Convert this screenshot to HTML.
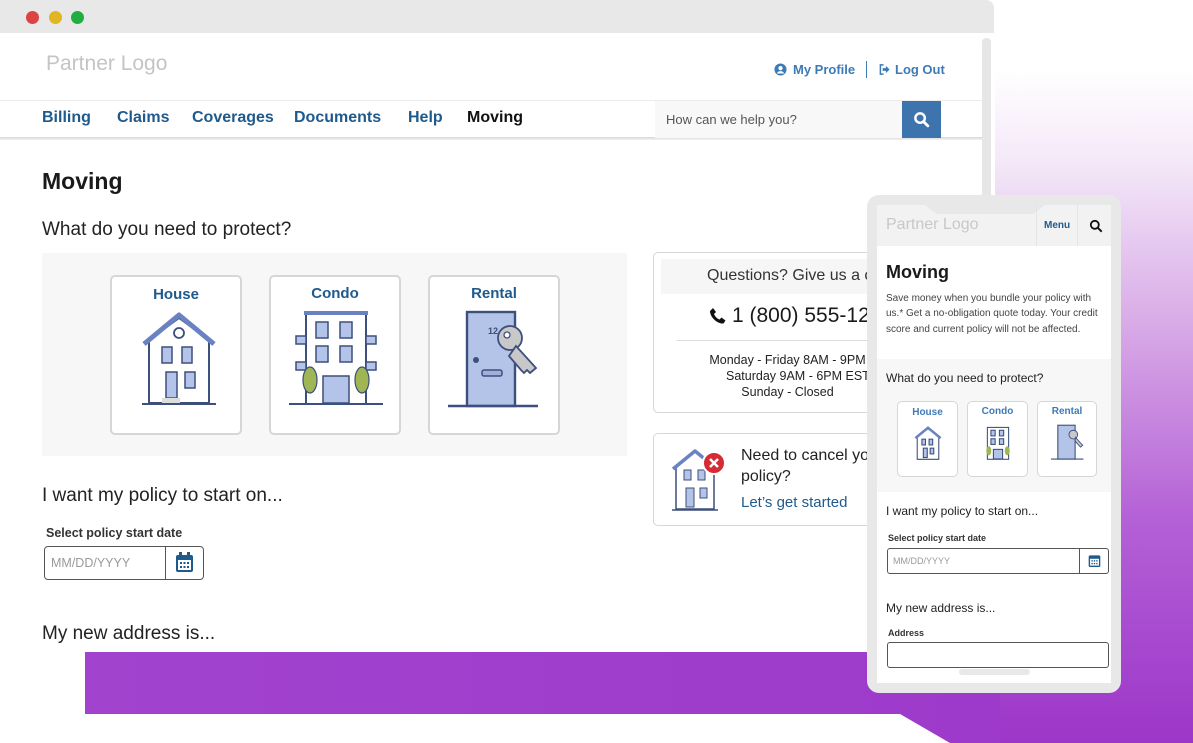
<!DOCTYPE html>
<html><head><meta charset="utf-8">
<style>
*{margin:0;padding:0;box-sizing:border-box}
body{width:1193px;height:743px;overflow:hidden;position:relative;background:#fff;font-family:"Liberation Sans",Arial,sans-serif;color:#1a1a1a}
.a{position:absolute}
.nav{font-size:16px;font-weight:bold;color:#1f5a8c;top:109px}
.card{background:#fff;border:2px solid #d6d6d6;border-radius:5px}
.ct{font-weight:bold;color:#1f5a8c;text-align:center}
</style></head><body>
<div class="a" style="left:995px;top:0;width:198px;height:743px;background:linear-gradient(180deg,#fff 0px,#fff 70px,#f4e9f8 160px,#d7a8e6 330px,#b460d6 520px,#9c36c9 743px)"></div>
<div class="a" style="left:0;top:652px;width:1000px;height:91px;background:linear-gradient(90deg,#a244cf,#9d3acb);clip-path:polygon(85px 0,1000px 0,1000px 91px,950px 91px,900px 62px,85px 62px)"></div>

<div class="a" style="left:0;top:0;width:994px;height:33px;background:#e8e8e8;border-top-right-radius:8px"></div>
<div class="a" style="left:26px;top:11px;width:13px;height:13px;border-radius:50%;background:#dc4444"></div>
<div class="a" style="left:49px;top:11px;width:13px;height:13px;border-radius:50%;background:#e0b624"></div>
<div class="a" style="left:71px;top:11px;width:13px;height:13px;border-radius:50%;background:#22ad40"></div>
<div class="a" style="left:982px;top:38px;width:9px;height:614px;background:#e6e6e6;border-radius:4px"></div>

<div class="a" style="left:46px;top:52px;font-size:21px;color:#c4c4c4">Partner Logo</div>
<div class="a" style="left:774px;top:62px;font-size:13px;font-weight:bold;color:#3d7ab8;display:flex;align-items:center;gap:6px">
<svg width="13" height="13" viewBox="0 0 14 14"><circle cx="7" cy="7" r="6.5" fill="#3d7ab8"/><circle cx="7" cy="5.5" r="2.3" fill="#fff"/><path d="M3 11.3c1-2 2.4-2.6 4-2.6s3 .6 4 2.6" fill="#fff"/></svg>My Profile</div>
<div class="a" style="left:866px;top:61px;width:1px;height:17px;background:#3d7ab8"></div>
<div class="a" style="left:879px;top:62px;font-size:13px;font-weight:bold;color:#3d7ab8;display:flex;align-items:center;gap:5px">
<svg width="11" height="11" viewBox="0 0 12 12"><path d="M5 1H1.5v10H5" fill="none" stroke="#3d7ab8" stroke-width="1.6"/><path d="M4 4.5h3.5V2L11.5 6 7.5 10V7.5H4z" fill="#3d7ab8"/></svg>Log Out</div>

<div class="a" style="left:0;top:100px;width:982px;height:1px;background:#ececec"></div>
<div class="a" style="left:0;top:137px;width:982px;height:3px;background:linear-gradient(#d8d8d8,#f2f2f2)"></div>
<div class="a nav" style="left:42px">Billing</div>
<div class="a nav" style="left:117px">Claims</div>
<div class="a nav" style="left:192px">Coverages</div>
<div class="a nav" style="left:294px">Documents</div>
<div class="a nav" style="left:408px">Help</div>
<div class="a nav" style="left:467px;color:#111">Moving</div>
<div class="a" style="left:655px;top:101px;width:247px;height:37px;background:#f8f8f8;font-size:13px;color:#555;padding:11px 0 0 11px">How can we help you?</div>
<div class="a" style="left:902px;top:101px;width:39px;height:37px;background:#3e74ad;display:flex;align-items:center;justify-content:center">
<svg width="17" height="17" viewBox="0 0 18 18"><circle cx="7.5" cy="7.5" r="5" fill="none" stroke="#fff" stroke-width="2.6"/><path d="M11.2 11.2l4.5 4.5" stroke="#fff" stroke-width="3" stroke-linecap="round"/></svg></div>

<div class="a" style="left:42px;top:168px;font-size:23px;font-weight:bold">Moving</div>
<div class="a" style="left:42px;top:219px;font-size:19px;color:#222">What do you need to protect?</div>
<div class="a" style="left:42px;top:253px;width:585px;height:203px;background:#f7f7f7"></div>

<div class="a card" style="left:110px;top:275px;width:132px;height:160px"></div>
<div class="a ct" style="left:110px;top:286px;width:132px;font-size:15px">House</div>
<svg class="a" style="left:140px;top:310px" width="78" height="98" viewBox="0 0 78 98">
<path d="M9 30V93h60V30L39 8z" fill="#fff" stroke="#3d4f7c" stroke-width="2"/>
<path d="M4 34L39 5l35 29" fill="none" stroke="#6b82c2" stroke-width="5" stroke-linejoin="round"/>
<circle cx="39" cy="23" r="5" fill="#fff" stroke="#3d4f7c" stroke-width="1.8"/>
<g fill="#b4c3e8" stroke="#3d4f7c" stroke-width="1.5"><rect x="22" y="37" width="10" height="16"/><rect x="42" y="37" width="10" height="16"/><rect x="26" y="62" width="11" height="26"/><rect x="45" y="62" width="10" height="16"/></g>
<path d="M2 94h74" stroke="#3d4f7c" stroke-width="2"/><rect x="22" y="88" width="18" height="5" fill="#ddd"/>
</svg>

<div class="a card" style="left:269px;top:275px;width:132px;height:160px"></div>
<div class="a ct" style="left:269px;top:285px;width:132px;font-size:15px">Condo</div>
<svg class="a" style="left:288px;top:310px" width="96" height="96" viewBox="0 0 96 96">
<rect x="18" y="4" width="60" height="90" fill="#fff" stroke="#3d4f7c" stroke-width="2"/><rect x="16" y="1" width="64" height="4" fill="#6b82c2"/>
<g fill="#b4c3e8" stroke="#3d4f7c" stroke-width="1.5"><rect x="8" y="26" width="10" height="8"/><rect x="78" y="26" width="10" height="8"/><rect x="8" y="52" width="10" height="8"/><rect x="78" y="52" width="10" height="8"/>
<rect x="28" y="12" width="12" height="16"/><rect x="52" y="12" width="12" height="16"/><rect x="28" y="36" width="12" height="16"/><rect x="52" y="36" width="12" height="16"/><rect x="35" y="66" width="26" height="27"/></g>
<ellipse cx="22" cy="70" rx="7" ry="13" fill="#a0b554" stroke="#3d4f7c" stroke-width="1.2"/><ellipse cx="74" cy="70" rx="7" ry="13" fill="#a0b554" stroke="#3d4f7c" stroke-width="1.2"/>
<path d="M1 94h94" stroke="#3d4f7c" stroke-width="2"/>
</svg>

<div class="a card" style="left:428px;top:275px;width:132px;height:160px"></div>
<div class="a ct" style="left:428px;top:285px;width:132px;font-size:15px">Rental</div>
<svg class="a" style="left:448px;top:310px" width="100" height="100" viewBox="0 0 100 100">
<rect x="19" y="2" width="48" height="94" fill="#b4c3e8" stroke="#3d4f7c" stroke-width="2.4"/>
<circle cx="28" cy="50" r="3" fill="#3d4f7c"/><rect x="34" y="60" width="20" height="6" rx="2" fill="#9fb0d8" stroke="#3d4f7c" stroke-width="1.5"/>
<text x="40" y="24" font-size="9" font-weight="bold" fill="#3d4f7c" font-family="Liberation Sans">12</text>
<circle cx="62" cy="28" r="12" fill="#c8c8c8" stroke="#3d4f7c" stroke-width="1.8"/><path d="M68 36l20 22-6 5-3-3-3 3-3-3-12-14z" fill="#c8c8c8" stroke="#3d4f7c" stroke-width="1.8"/><circle cx="59" cy="25" r="3" fill="#fff" stroke="#3d4f7c" stroke-width="1.3"/>
<path d="M0 96h90" stroke="#3d4f7c" stroke-width="2.4"/>
</svg>

<div class="a card" style="left:653px;top:252px;width:240px;height:161px;border-width:1px;border-right:none"></div>
<div class="a" style="left:661px;top:259px;width:220px;height:35px;background:#f6f6f6;font-size:16px;color:#333;padding:8px 0 0 46px;white-space:nowrap;overflow:hidden">Questions? Give us a call</div>
<div class="a" style="left:709px;top:304px;font-size:21px;white-space:nowrap;display:flex;align-items:center;gap:5px">
<svg width="18" height="18" viewBox="0 0 18 18"><path d="M4 1l3 4-2 2c1 2.5 3 4.5 5.5 5.5l2-2 4 3-2 3C8 17 1 10 1 4z" fill="#111"/></svg>1 (800) 555-1234</div>
<div class="a" style="left:677px;top:340px;width:200px;height:1px;background:#ddd"></div>
<div class="a" style="left:700px;top:352px;width:175px;font-size:12.5px;line-height:16px;text-align:center;color:#222;white-space:nowrap">Monday - Friday 8AM - 9PM<br>&nbsp;&nbsp;&nbsp;&nbsp;&nbsp;&nbsp;Saturday 9AM - 6PM EST<br>Sunday - Closed</div>
<div class="a" style="left:867px;top:240px;width:20px;height:300px;background:#e8e8e8"></div>

<div class="a card" style="left:653px;top:433px;width:240px;height:93px;border-width:1px;border-right:none"></div>
<svg class="a" style="left:672px;top:448px" width="56" height="64" viewBox="0 0 56 64">
<path d="M4 18V61h38V18L23 4z" fill="#fff" stroke="#3d4f7c" stroke-width="1.5"/><path d="M1 21L23 3l22 18" fill="none" stroke="#6b82c2" stroke-width="3.5" stroke-linejoin="round"/>
<g fill="#b4c3e8" stroke="#3d4f7c" stroke-width="1"><rect x="12" y="22" width="7" height="10"/><rect x="26" y="22" width="7" height="10"/><rect x="14" y="40" width="8" height="19"/><rect x="28" y="40" width="7" height="10"/></g><path d="M0 62h46" stroke="#3d4f7c" stroke-width="1.5"/>
<circle cx="42" cy="15" r="11" fill="#d42b34" stroke="#fff" stroke-width="2"/><path d="M38 11l8 8M46 11l-8 8" stroke="#fff" stroke-width="2.5"/>
</svg>
<div class="a" style="left:741px;top:445px;font-size:16px;line-height:21px;color:#222;width:126px;overflow:hidden;white-space:nowrap">Need to cancel your<br>policy?</div>
<div class="a" style="left:741px;top:494px;font-size:15px;color:#1f5a8c">Let’s get started</div>

<div class="a" style="left:42px;top:485px;font-size:19px;color:#222">I want my policy to start on...</div>
<div class="a" style="left:46px;top:526px;font-size:12.5px;font-weight:bold;color:#333">Select policy start date</div>
<div class="a" style="left:44px;top:546px;width:160px;height:34px;border:1px solid #555;border-radius:4px"></div>
<div class="a" style="left:165px;top:547px;width:1px;height:32px;background:#555"></div>
<div class="a" style="left:51px;top:556px;font-size:12.5px;color:#999">MM/DD/YYYY</div>
<svg class="a" style="left:175px;top:552px" width="19" height="21" viewBox="0 0 19 21"><rect x="1" y="3" width="17" height="17" rx="2" fill="#1f5a8c"/><rect x="3" y="8" width="13" height="10" fill="#fff"/><rect x="4" y="0" width="3" height="5" fill="#1f5a8c"/><rect x="12" y="0" width="3" height="5" fill="#1f5a8c"/><g fill="#1f5a8c"><rect x="5" y="10" width="2" height="2"/><rect x="8.5" y="10" width="2" height="2"/><rect x="12" y="10" width="2" height="2"/><rect x="5" y="14" width="2" height="2"/><rect x="8.5" y="14" width="2" height="2"/><rect x="12" y="14" width="2" height="2"/></g></svg>
<div class="a" style="left:42px;top:623px;font-size:19px;color:#222">My new address is...</div>

<div class="a" style="left:867px;top:195px;width:254px;height:498px;background:#e8e8e8;border-radius:12px"></div>
<div class="a" style="left:877px;top:205px;width:234px;height:478px;background:#fff"></div>
<div class="a" style="left:877px;top:205px;width:234px;height:41px;background:#f2f2f2"></div>
<div class="a" style="left:925px;top:205px;width:120px;height:9px;background:#e8e8e8;clip-path:polygon(0 0,100% 0,90% 100%,10% 100%)"></div>
<div class="a" style="left:1036px;top:205px;width:1px;height:41px;background:#e4e4e4"></div>
<div class="a" style="left:1077px;top:205px;width:1px;height:41px;background:#e4e4e4"></div>
<div class="a" style="left:886px;top:216px;font-size:16px;color:#c8c8c8">Partner Logo</div>
<div class="a" style="left:1044px;top:220px;font-size:10px;font-weight:bold;color:#1f5a8c">Menu</div>
<svg class="a" style="left:1089px;top:219px" width="14" height="14" viewBox="0 0 14 14"><circle cx="5.8" cy="5.8" r="4" fill="none" stroke="#111" stroke-width="1.8"/><path d="M8.7 8.7l4 4" stroke="#111" stroke-width="2"/></svg>
<div class="a" style="left:886px;top:262px;font-size:18px;font-weight:bold">Moving</div>
<div class="a" style="left:886px;top:291px;width:222px;font-size:10px;line-height:15.3px;color:#444">Save money when you bundle your policy with us.* Get a no-obligation quote today. Your credit score and current policy will not be affected.</div>
<div class="a" style="left:877px;top:359px;width:234px;height:133px;background:#f7f7f7"></div>
<div class="a" style="left:886px;top:371px;font-size:12px;color:#222">What do you need to protect?</div>
<div class="a card" style="left:897px;top:401px;width:61px;height:76px;border-width:1px"></div>
<div class="a card" style="left:967px;top:401px;width:61px;height:76px;border-width:1px"></div>
<div class="a card" style="left:1037px;top:401px;width:60px;height:76px;border-width:1px"></div>
<div class="a ct" style="left:897px;top:407px;width:61px;font-size:10px;color:#3d7ab8">House</div>
<div class="a ct" style="left:967px;top:406px;width:61px;font-size:10px;color:#3d7ab8">Condo</div>
<div class="a ct" style="left:1037px;top:406px;width:60px;font-size:10px;color:#3d7ab8">Rental</div>
<svg class="a" style="left:914px;top:425px" width="28" height="37" viewBox="0 0 78 98"><path d="M9 30V93h60V30L39 8z" fill="#fff" stroke="#3d4f7c" stroke-width="3"/><path d="M4 34L39 5l35 29" fill="none" stroke="#6b82c2" stroke-width="7"/><g fill="#b4c3e8" stroke="#3d4f7c" stroke-width="3"><rect x="22" y="37" width="10" height="16"/><rect x="42" y="37" width="10" height="16"/><rect x="26" y="62" width="11" height="26"/><rect x="45" y="62" width="10" height="16"/></g></svg>
<svg class="a" style="left:981px;top:424px" width="34" height="38" viewBox="0 0 96 96"><rect x="18" y="4" width="60" height="90" fill="#fff" stroke="#3d4f7c" stroke-width="3"/><g fill="#b4c3e8" stroke="#3d4f7c" stroke-width="3"><rect x="28" y="12" width="12" height="16"/><rect x="52" y="12" width="12" height="16"/><rect x="28" y="36" width="12" height="16"/><rect x="52" y="36" width="12" height="16"/><rect x="35" y="66" width="26" height="27"/></g><ellipse cx="22" cy="70" rx="7" ry="13" fill="#a0b554"/><ellipse cx="74" cy="70" rx="7" ry="13" fill="#a0b554"/></svg>
<svg class="a" style="left:1051px;top:424px" width="36" height="37" viewBox="0 0 100 100"><rect x="19" y="2" width="48" height="94" fill="#b4c3e8" stroke="#3d4f7c" stroke-width="3"/><circle cx="62" cy="28" r="12" fill="#c8c8c8" stroke="#3d4f7c" stroke-width="2.5"/><path d="M68 36l20 22-6 5-15-17z" fill="#c8c8c8" stroke="#3d4f7c" stroke-width="2.5"/><path d="M0 96h90" stroke="#3d4f7c" stroke-width="3"/></svg>
<div class="a" style="left:886px;top:504px;font-size:12px;color:#222">I want my policy to start on...</div>
<div class="a" style="left:888px;top:533px;font-size:9px;font-weight:bold;color:#333">Select policy start date</div>
<div class="a" style="left:887px;top:548px;width:222px;height:26px;border:1px solid #555;border-radius:3px"></div>
<div class="a" style="left:1079px;top:549px;width:1px;height:24px;background:#555"></div>
<div class="a" style="left:893px;top:556px;font-size:9px;color:#999">MM/DD/YYYY</div>
<svg class="a" style="left:1088px;top:553px" width="13" height="15" viewBox="0 0 19 21"><rect x="1" y="3" width="17" height="17" rx="2" fill="#1f5a8c"/><rect x="3" y="8" width="13" height="10" fill="#fff"/><g fill="#1f5a8c"><rect x="5" y="10" width="2" height="2"/><rect x="8.5" y="10" width="2" height="2"/><rect x="12" y="10" width="2" height="2"/><rect x="5" y="14" width="2" height="2"/><rect x="8.5" y="14" width="2" height="2"/><rect x="12" y="14" width="2" height="2"/></g></svg>
<div class="a" style="left:886px;top:601px;font-size:12px;color:#222">My new address is...</div>
<div class="a" style="left:888px;top:628px;font-size:9px;font-weight:bold;color:#333">Address</div>
<div class="a" style="left:887px;top:642px;width:222px;height:26px;border:1px solid #555;border-radius:3px"></div>
<div class="a" style="left:959px;top:669px;width:71px;height:6px;background:#e8e8e8;border-radius:3px"></div>
</body></html>
